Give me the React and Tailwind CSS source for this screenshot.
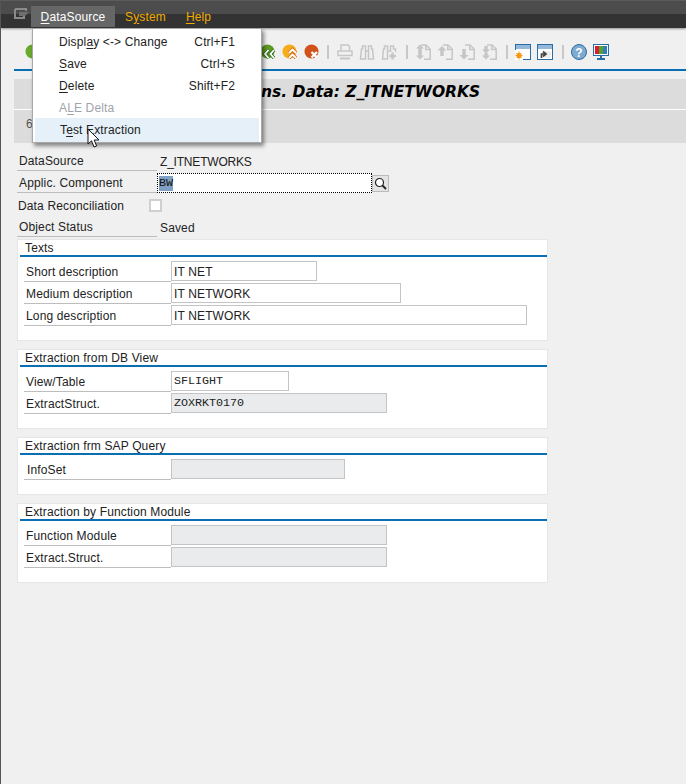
const font = { fontFamily: '"Liberation Sans", Arial, sans-serif', letterSpacing: '0.14px' };
const mono = { fontFamily: '"Liberation Mono", monospace', letterSpacing: '0' };

function Key({ children }) {
  return <span className="underline underline-offset-2">{children}</span>;
}

function MenuItem({ children, shortcut, active, disabled }) {
  return (
    <div className={`flex items-center justify-between pr-[24px] ${active ? 'h-[24px] -mt-px pl-[25px] bg-[#e5f0f8]' : 'h-[22px] pl-[24px]'} ${disabled ? 'text-[#a0a4aa]' : 'text-[#222]'}`}>
      <span>{children}</span>
      {shortcut && <span>{shortcut}</span>}
    </div>
  );
}

function DataSourceMenu() {
  return (
    <div className="absolute left-[31px] top-[28px] w-[230px] h-[115px] bg-white border border-[#a8a8a8] shadow-[2px_3px_4px_rgba(0,0,0,0.45)] pt-[2px] px-[2px] z-10">
      <MenuItem shortcut="Ctrl+F1">Displ<Key>a</Key>y &lt;-&gt; Change</MenuItem>
      <MenuItem shortcut="Ctrl+S"><Key>S</Key>ave</MenuItem>
      <MenuItem shortcut="Shift+F2"><Key>D</Key>elete</MenuItem>
      <MenuItem disabled>A<Key>L</Key>E Delta</MenuItem>
      <MenuItem active>T<Key>e</Key>st Extraction</MenuItem>
    </div>
  );
}

function Cursor() {
  return (
    <svg className="absolute left-[86px] top-[128px] z-20" width="14" height="21" viewBox="0 0 14 21">
      <path d="M1 1 L1 16 L4.5 12.8 L7 19 L9.6 18 L7.2 12 L12 12 Z" fill="#fff" stroke="#111" strokeWidth="1" />
    </svg>
  );
}

function RoundIcon({ color, children }) {
  return (
    <svg width="16" height="16" viewBox="0 0 16 16">
      <circle cx="7.5" cy="7.5" r="7" fill={color} />
      {children}
    </svg>
  );
}

function Sep({ className }) {
  return <div className={`w-[2px] h-[14px] bg-[#c8c8c8] ${className}`} />;
}

// all the disabled toolbar glyphs share this stroke
function GrayIcon({ children }) {
  return (
    <svg width="16" height="16" viewBox="0 0 16 16" fill="none" stroke="#c6c6c6" strokeWidth="1.5">
      {children}
    </svg>
  );
}

function Page({ children }) {
  return (
    <GrayIcon>
      <path d="M6 1 H11 L15.2 5 V15.2 H9" />
      <path d="M10.8 1 V5.4 H15" />
      {children}
    </GrayIcon>
  );
}

function Toolbar() {
  return (
    <div className="relative flex items-start h-[41px] pt-[16px] pl-[24px]">
      <RoundIcon color="#6aa82e" />
      <div className="flex items-center ml-[219px]">
        <RoundIcon color="#5c9a24">
          <path d="M8.5 6 L5 10 L8.5 14 M14 6 L10.5 10 L14 14" fill="none" stroke="#2f6a18" strokeWidth="3.4" />
          <path d="M8.5 6 L5 10 L8.5 14 M14 6 L10.5 10 L14 14" fill="none" stroke="#fff" strokeWidth="1.8" />
        </RoundIcon>
        <div className="ml-[6px]">
          <RoundIcon color="#f6ad1c">
            <path d="M7 9 L10.5 5.5 L14 9 M7 14 L10.5 10.5 L14 14" fill="none" stroke="#d96f10" strokeWidth="3.4" />
            <path d="M7 9 L10.5 5.5 L14 9 M7 14 L10.5 10.5 L14 14" fill="none" stroke="#fff" strokeWidth="1.8" />
          </RoundIcon>
        </div>
        <div className="ml-[6px]">
          <RoundIcon color="#d2521c">
            <path d="M7.5 8 L13 13.5 M13 8 L7.5 13.5" stroke="#fff" strokeWidth="2.4" />
          </RoundIcon>
        </div>
        <Sep className="ml-[7px]" />
        <div className="flex items-center gap-[6px] ml-[8px]">
          <GrayIcon>
            <path d="M4 6.5 V1 H11 L12.5 2.5 V6.5" />
            <path d="M1 7 H15 V11.5 H1 Z" />
            <path d="M3 14.5 H13" strokeWidth="2" />
          </GrayIcon>
          <GrayIcon>
            <path d="M1.5 15 H6.5 V2 H3.5 V5 H2.5 Z M14.5 15 H9.5 V2 H12.5 V5 H13.5 Z M6.5 7 H9.5" />
          </GrayIcon>
          <GrayIcon>
            <path d="M1.5 15 H6.5 V2 H3.5 V5 H2.5 Z M14.5 8 V5 H12.5 V2 H9.5 V8 M6.5 7 H9.5" />
            <path d="M11.5 8.5 V15.5 M8.5 12 H15" strokeWidth="2.4" />
          </GrayIcon>
        </div>
        <Sep className="ml-[9px]" />
        <div className="flex items-center gap-[6px] ml-[7px]">
          <Page><path d="M5 0.5 L1 4.5 H9 Z M5 15.5 L1 11.5 H9 Z" fill="#c6c6c6" stroke="none" /><path d="M5 4 V12" strokeWidth="3.5" /></Page>
          <Page><path d="M5 2 L0.5 6.5 H9.5 Z" fill="#c6c6c6" stroke="none" /><path d="M5 6 V12" strokeWidth="3.5" /></Page>
          <Page><path d="M5 15.5 L0.5 11 H9.5 Z" fill="#c6c6c6" stroke="none" /><path d="M5 5 V11.5" strokeWidth="3.5" /></Page>
          <Page><path d="M5 15.5 L1 11.5 H9 Z M5 9.5 L1 5.5 H9 Z" fill="#c6c6c6" stroke="none" /><path d="M5 2 V6 M5 9 V12" strokeWidth="3.5" /></Page>
        </div>
        <Sep className="ml-[9px]" />
        <div className="flex items-center gap-[6px] ml-[7px]">
          <svg width="16" height="16" viewBox="0 0 16 16">
            <rect x="0.5" y="0.5" width="15" height="15" fill="#fff" stroke="#2b6da3" />
            <rect x="1" y="1" width="14" height="4" fill="#94b8dc" />
            <path d="M0 6 H8 V16 H0 Z" fill="#fff" />
            <circle cx="4" cy="11.5" r="2.6" fill="#f59a10" />
            <path d="M4 7.5 V15.5 M0.5 11.5 H7.5 M1.5 9 L6.5 14 M6.5 9 L1.5 14" stroke="#f59a10" />
          </svg>
          <svg width="16" height="16" viewBox="0 0 16 16">
            <rect x="0.5" y="0.5" width="15" height="15" fill="#fff" stroke="#2b6da3" />
            <rect x="1" y="1" width="14" height="4" fill="#94b8dc" />
            <rect x="8" y="7" width="6" height="7" fill="#eeeeee" />
            <path d="M4.5 14 V10 H8 M6 7.5 L9 10 L6 12.5" fill="none" stroke="#444" strokeWidth="1.7" />
          </svg>
        </div>
        <Sep className="ml-[9px]" />
        <div className="flex items-center gap-[6px] ml-[7px]">
          <svg width="16" height="16" viewBox="0 0 16 16">
            <circle cx="8" cy="8" r="7.5" fill="#7eaad0" stroke="#2b6da3" />
            <text x="8" y="12.5" textAnchor="middle" fontSize="12" fontWeight="700" fill="#fff" style={font}>?</text>
          </svg>
          <svg width="16" height="16" viewBox="0 0 16 16">
            <rect x="0.5" y="0.5" width="15" height="11" fill="#fff" stroke="#2b6da3" />
            <rect x="2" y="2" width="4" height="8" fill="#d81e2c" />
            <rect x="6" y="2" width="4" height="8" fill="#5aa02c" />
            <rect x="10" y="2" width="4" height="8" fill="#2b7fc0" />
            <path d="M8 12 V14 M4 15 H12" stroke="#2b6da3" strokeWidth="2" />
          </svg>
        </div>
      </div>
    </div>
  );
}

function TextInput({ width, value, disabled, isMono }) {
  return (
    <div
      className={`h-[20px] mt-[1px] border border-[#c4c4c4] flex items-center pl-[2px] pt-[1px] ${disabled ? 'bg-[#e9ebed]' : 'bg-white'} ${isMono ? 'text-[11.7px] text-[#222]' : ''}`}
      style={{ width, ...(isMono ? mono : {}) }}
    >
      {value}
    </div>
  );
}

function FieldRow({ label, indent, children }) {
  return (
    <div className="flex h-[22px]">
      <div className={`w-[147px] h-[22px] border-b border-[#bdbdbd] flex items-center pt-[2px] ${indent ? 'pl-[3px]' : 'pl-[2px]'}`}>{label}</div>
      {children}
    </div>
  );
}

function Group({ title, height, children }) {
  return (
    <div className="w-[531px] ml-[16px] mb-[8px] bg-white border border-[#e6e6e6]" style={{ height }}>
      <div className="h-[15px] pl-[7px] pt-[1px] leading-[15px]">{title}</div>
      <div className="h-[2px] ml-[2px] bg-[#0a6fb2]" />
      <div className="pl-[6px] pt-[3px]">{children}</div>
    </div>
  );
}

function TopRow({ label, children }) {
  return (
    <div className="flex h-[22px]">
      <div className="w-[140px] h-[22px] pl-[2px] pt-[3px] flex items-center border-b border-[#bdbdbd]">{label}</div>
      {children}
    </div>
  );
}

export default function App() {
  return (
    <div className="relative w-[686px] h-[784px] overflow-hidden bg-[#f0f0f0] border-l border-[#555] text-[12px] text-[#222]" style={font}>
      {/* window header */}
      <div className="relative h-[28px] bg-[#333] shadow-[0_1px_2px_rgba(0,0,0,0.4)]">
        <div className="h-[14px] bg-[#4c4c4c] border-t border-[#5c5c5c]" />
        <div className="absolute inset-0 flex">
          <svg className="ml-[13px] mt-[8px]" width="16" height="11" viewBox="0 0 16 11">
            <path d="M1 1 H12 V3 M1 1 V10 H10 V8" fill="none" stroke="#8a8a8a" strokeWidth="2" />
            <path d="M5 4 H15 L11 8 H5 Z" fill="#6e6e6e" />
          </svg>
          <div className="ml-[1px] mt-[6px] w-[84px] h-[21px] bg-[#666] flex items-center justify-center text-white">
            <span><Key>D</Key>ataSource</span>
          </div>
          <div className="flex items-center h-[21px] mt-[6px] ml-[10px] gap-[20px] text-[#f0ab00]">
            <span>S<Key>y</Key>stem</span>
            <span><Key>H</Key>elp</span>
          </div>
        </div>
      </div>

      <div className="ml-[13px]">
        <div className="-ml-[13px]"><Toolbar /></div>
        <div className="h-[2px] bg-[#0a6fb2]" />
        <div className="mt-[8px] h-[31px] bg-[#dcdcdc] border-b border-white">
          <div
            className="pl-[247px] h-[27px] flex items-center text-[15.5px] font-bold italic text-black whitespace-nowrap"
            style={{ fontFamily: '"DejaVu Sans", sans-serif', letterSpacing: '0' }}
          >
            ns. Data: Z_ITNETWORKS
          </div>
        </div>
        <div className="h-[33px] bg-[#dcdcdc] pl-[12px] pt-[5px] text-[#555]">6</div>
      </div>

      {/* header fields */}
      <div className="pl-[16px] pt-[6px]">
        <TopRow label="DataSource"><div className="pl-[3px] pt-[3px] flex items-center tracking-[-0.2px]">Z_ITNETWORKS</div></TopRow>
        <TopRow label="Applic. Component">
          <div className="h-[20px] mt-[2px] w-[215px] bg-white border border-dotted border-black flex items-center pl-[1px]" style={mono}>
            <span className="bg-[#7f9fc4] text-[#111] text-[11.7px] leading-[15px]">BW</span>
          </div>
          <div className="mt-[4px] w-[17px] h-[17px] bg-[#e4e4e4] border border-[#bbb] flex items-center justify-center">
            <svg width="13" height="13" viewBox="0 0 13 13">
              <circle cx="5.5" cy="5.5" r="4" fill="#fff" stroke="#222" strokeWidth="1.2" />
              <path d="M8.5 8.5 L12 12" stroke="#222" strokeWidth="1.8" />
            </svg>
          </div>
        </TopRow>
        <div className="flex h-[22px]">
          <div className="w-[132px] pl-[1px] pt-[3px] flex items-center">Data Reconciliation</div>
          <div className="mt-[6px] w-[13px] h-[13px] bg-white border-2 border-[#cfcfcf]" />
        </div>
        <TopRow label="Object Status"><div className="pl-[3px] pt-[3px] flex items-center">Saved</div></TopRow>
      </div>

      <div className="mt-[2px]">
        <Group title="Texts" height={102}>
          <FieldRow label="Short description"><TextInput width={146} value="IT NET" /></FieldRow>
          <FieldRow label="Medium description"><TextInput width={230} value="IT NETWORK" /></FieldRow>
          <FieldRow label="Long description"><TextInput width={356} value="IT NETWORK" /></FieldRow>
        </Group>
        <Group title="Extraction from DB View" height={80}>
          <FieldRow label="View/Table"><TextInput width={118} value="SFLIGHT" isMono /></FieldRow>
          <FieldRow label="ExtractStruct."><TextInput width={216} value="ZOXRKT0170" isMono disabled /></FieldRow>
        </Group>
        <Group title="Extraction frm SAP Query" height={58}>
          <FieldRow label="InfoSet" indent><TextInput width={174} disabled /></FieldRow>
        </Group>
        <Group title="Extraction by Function Module" height={80}>
          <FieldRow label="Function Module"><TextInput width={216} disabled /></FieldRow>
          <FieldRow label="Extract.Struct."><TextInput width={216} disabled /></FieldRow>
        </Group>
      </div>

      <DataSourceMenu />
      <Cursor />
    </div>
  );
}
